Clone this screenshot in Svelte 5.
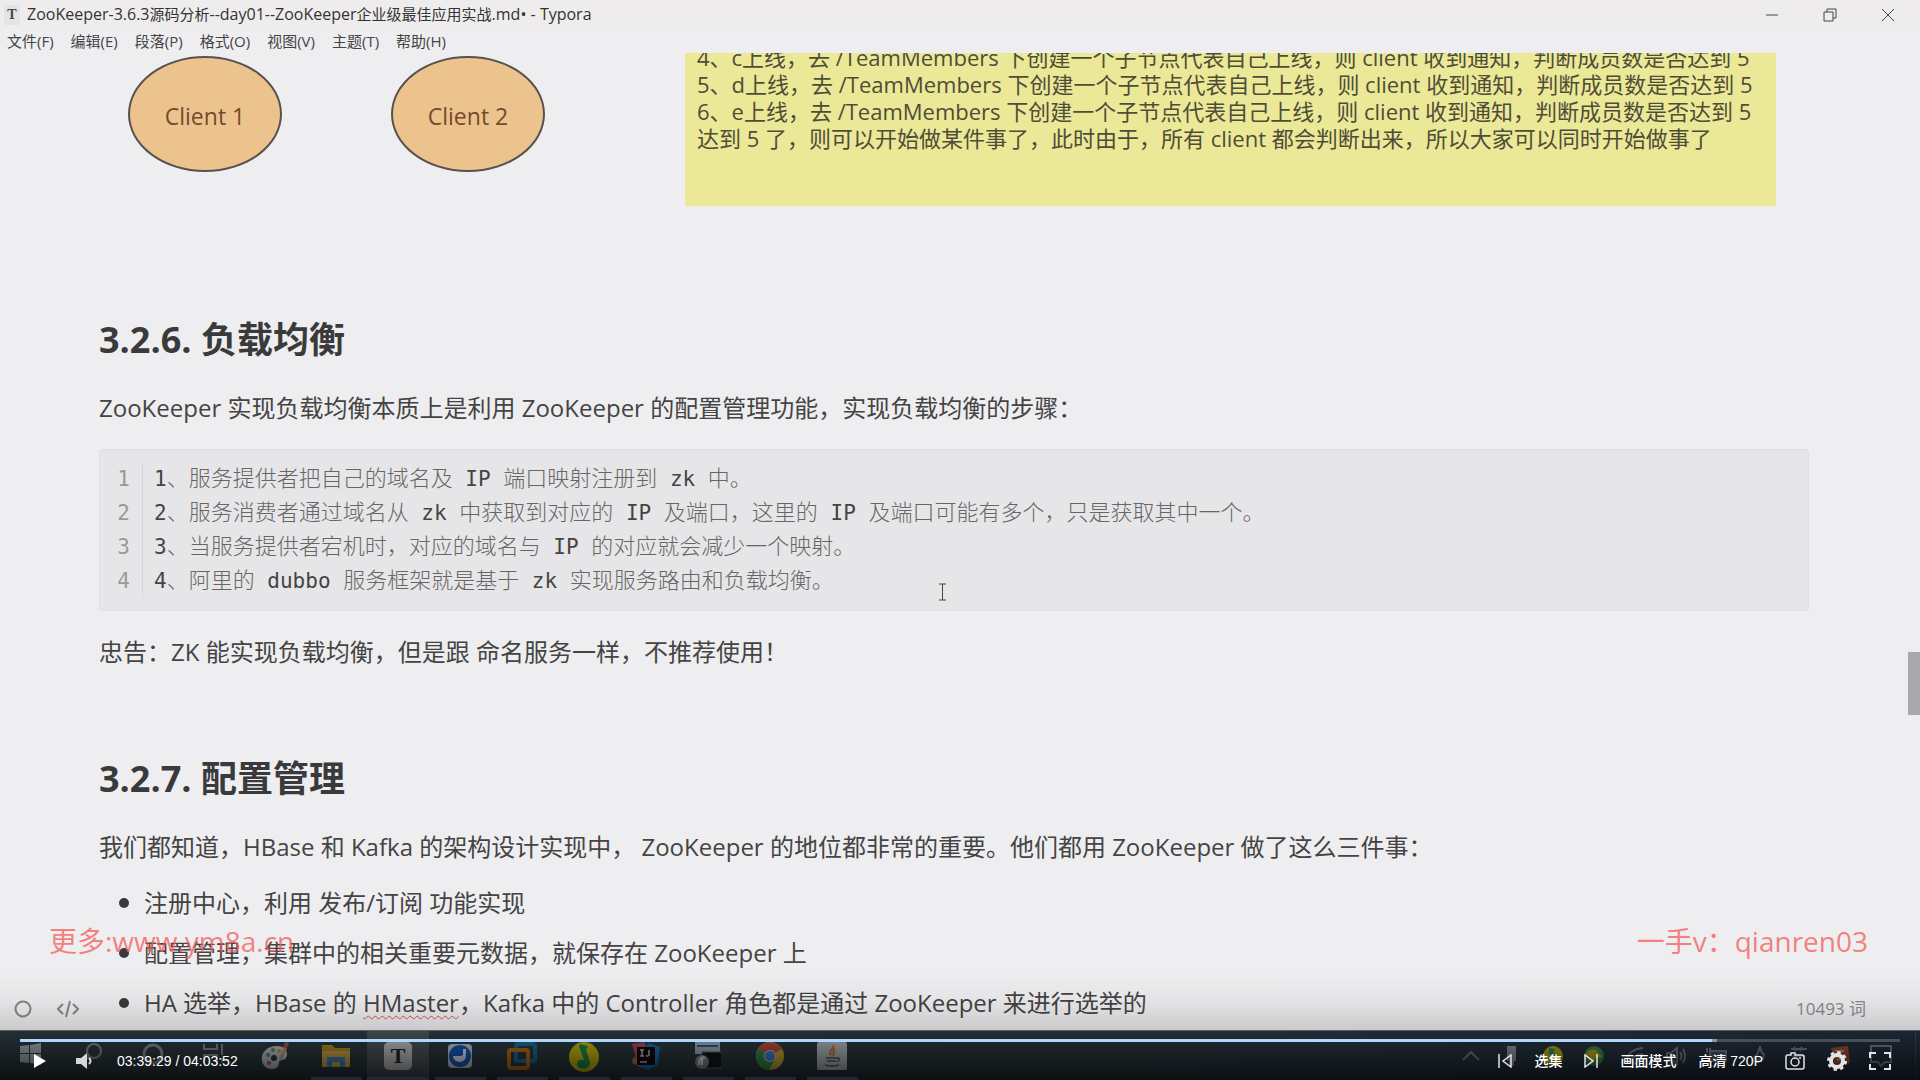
<script lang="ts">
  const menus = ['文件(F)', '编辑(E)', '段落(P)', '格式(O)', '视图(V)', '主题(T)', '帮助(H)']

  const noteLines = [
    '4、c上线，去 /TeamMembers 下创建一个子节点代表自己上线，则 client 收到通知，判断成员数是否达到 5',
    '5、d上线，去 /TeamMembers 下创建一个子节点代表自己上线，则 client 收到通知，判断成员数是否达到 5',
    '6、e上线，去 /TeamMembers 下创建一个子节点代表自己上线，则 client 收到通知，判断成员数是否达到 5',
    '达到 5 了，则可以开始做某件事了，此时由于，所有 client 都会判断出来，所以大家可以同时开始做事了'
  ]

  const codeLines = [
    '1、服务提供者把自己的域名及 IP 端口映射注册到 zk 中。',
    '2、服务消费者通过域名从 zk 中获取到对应的 IP 及端口，这里的 IP 及端口可能有多个，只是获取其中一个。',
    '3、当服务提供者宕机时，对应的域名与 IP 的对应就会减少一个映射。',
    '4、阿里的 dubbo 服务框架就是基于 zk 实现服务路由和负载均衡。'
  ]

  // 把一行代码拆成英文段和中文段
  function split(line: string) {
    return line.match(/[\x20-\x7e]+|[^\x20-\x7e]+/g) ?? []
  }

  function isLatin(part: string) {
    return /^[\x20-\x7e]/.test(part)
  }

  const apps = ['folder', 'typora', 'todo', 'vmware', 'music', 'idea', 'terminal', 'chrome', 'java']

  const duration = 4 * 3600 + 3 * 60 + 52
  let current = 3 * 3600 + 39 * 60 + 29
  let buffered = 13208

  function format(s: number) {
    const pad = (n: number) => String(n).padStart(2, '0')
    return `${pad(Math.floor(s / 3600))}:${pad(Math.floor(s / 60) % 60)}:${pad(s % 60)}`
  }

  $: played = (current / duration) * 100
  $: loaded = (buffered / duration) * 100
</script>

<div class="screen">
  <header class="titlebar">
    <span class="logo">T</span>
    <h1>ZooKeeper-3.6.3<span>源码分析</span>--day01--ZooKeeper<span>企业级最佳应用实战</span>.md• - Typora</h1>
    <div class="window-buttons">
      <button aria-label="最小化">
        <svg width="14" height="14" viewBox="0 0 14 14"><path d="M1 7h12" /></svg>
      </button>
      <button aria-label="还原">
        <svg width="14" height="14" viewBox="0 0 14 14"><path d="M1 4h9v9H1zM4 4V1h9v9h-3" /></svg>
      </button>
      <button aria-label="关闭">
        <svg width="14" height="14" viewBox="0 0 14 14"><path d="M1 1l12 12M13 1L1 13" /></svg>
      </button>
    </div>
  </header>

  <nav class="menubar">
    {#each menus as menu}
      <button>{menu}</button>
    {/each}
  </nav>

  <main class="document">
    <div class="diagram">
      <div class="client">Client 1</div>
      <div class="client">Client 2</div>
      <div class="note">
        <div class="note-text">
          {#each noteLines as line}
            <p>{line}</p>
          {/each}
        </div>
      </div>
    </div>

    <h2>3.2.6. 负载均衡</h2>
    <p>ZooKeeper 实现负载均衡本质上是利用 ZooKeeper 的配置管理功能，实现负载均衡的步骤：</p>

    <div class="code">
      {#each codeLines as line, i}
        <div class="code-line">
          <span class="number">{i + 1}</span>
          <code>{#each split(line) as part}<span class:latin={isLatin(part)}>{part}</span>{/each}</code>
        </div>
      {/each}
    </div>

    <p>忠告：ZK 能实现负载均衡，但是跟 命名服务一样，不推荐使用！</p>

    <h2 class="second">3.2.7. 配置管理</h2>
    <p>我们都知道，HBase 和 Kafka 的架构设计实现中， ZooKeeper 的地位都非常的重要。他们都用 ZooKeeper 做了这么三件事：</p>

    <ul>
      <li>注册中心，利用 发布/订阅 功能实现</li>
      <li>配置管理，集群中的相关重要元数据，就保存在 ZooKeeper 上</li>
      <li>HA 选举，HBase 的 <u>HMaster</u>，Kafka 中的 Controller 角色都是通过 ZooKeeper 来进行选举的</li>
    </ul>

    <div class="scroll-thumb"></div>
    <svg class="caret" width="9" height="18" viewBox="0 0 9 18"><path d="M1 1h7M1 17h7M4.500 1v16" /></svg>
  </main>

  <footer class="statusbar">
    <button aria-label="侧边栏">
      <svg width="18" height="18" viewBox="0 0 18 18"><circle cx="9" cy="9" r="7.500" /></svg>
    </button>
    <button aria-label="源代码模式">
      <svg width="22" height="18" viewBox="0 0 22 18"><path d="M6 4L1 9l5 5M16 4l5 5-5 5M13 1L9 17" /></svg>
    </button>
    <span class="words">10493 词</span>
  </footer>

  <div class="taskbar">
    <div class="system">
      <span>
        <svg width="24" height="24" viewBox="0 0 24 24" fill="#9aa7ae"><path d="M1 4l9-1v8H1zM11 3l11-2v10H11zM1 12h9v9l-9-1zM11 12h11v11l-11-2z" /></svg>
      </span>
      <span>
        <svg width="24" height="24" viewBox="0 0 24 24" fill="none" stroke="#7d878d" stroke-width="2"><circle cx="14" cy="9" r="7" /><path d="M9 14l-7 8" /></svg>
      </span>
      <span>
        <svg width="24" height="24" viewBox="0 0 24 24" fill="none" stroke="#7d878d" stroke-width="3"><circle cx="12" cy="12" r="9" /></svg>
      </span>
      <span>
        <svg width="24" height="24" viewBox="0 0 24 24" fill="none" stroke="#7d878d" stroke-width="2"><path d="M2 2v5h13V2M2 22v-9h13v9M20 2v11M20 16v4" /></svg>
      </span>
      <span>
        <svg width="28" height="28" viewBox="0 0 28 28"><path d="M1 19C-1 10 8 3 17 4c8 0 11 7 8 12-2 3-6 1-7 4 0 4-2 7-7 7-5 0-9-3-10-8z" fill="#b4bcc2" /><circle cx="7" cy="13" r="2" fill="#4d7b9c" /><circle cx="12" cy="8" r="2" fill="#648b51" /><circle cx="13" cy="16" r="3" fill="#26353c" /><circle cx="18" cy="9" r="2" fill="#bf9345" /><circle cx="8" cy="21" r="2" fill="#9c5148" /><path d="M18 17l5-12 3 1-5 12z" fill="#c09070" /><path d="M22 5l2-5 4 1-2 5z" fill="#a4543c" /></svg>
      </span>
    </div>

    <div class="apps">
      {#each apps as app}
        <span class:active={app === 'typora'}>
          {#if app === 'folder'}
            <svg width="28" height="28" viewBox="0 0 28 28"><path d="M0 3h10l3 3h15v19H0z" fill="#b38624" /><path d="M0 9h28v16H0z" fill="#c8a142" /><path d="M5 15h18v10h-5v-5h-8v5H5z" fill="#3f7fb0" /></svg>
          {:else if app === 'typora'}
            <b>T</b>
          {:else if app === 'todo'}
            <svg width="28" height="28" viewBox="0 0 28 28"><rect x="2" y="2" width="24" height="24" rx="4" fill="#b4c3cf" /><circle cx="14" cy="14" r="11" fill="#1657b4" /><path d="M7 14h8q2 0 2-2V7h3v7a6 6 0 0 1-6 6c-4 0-7-3-7-6z" fill="#d4e0ea" /></svg>
          {:else if app === 'vmware'}
            <svg width="30" height="28" viewBox="0 0 30 28" fill="none" stroke-width="4"><rect x="9" y="2" width="19" height="17" rx="2" stroke="#146c91" /><rect x="2" y="8" width="19" height="18" rx="2" stroke="#b56b18" /><path d="M9 15v4h8" stroke="#146c91" /></svg>
          {:else if app === 'music'}
            <svg width="30" height="30" viewBox="0 0 30 30"><circle cx="15" cy="15" r="15" fill="#c2b40e" /><path d="M11 2l8 2-2 4 4 12c1 8-13 9-13 2 0-3 3-5 7-4L10 4z" fill="#178747" /></svg>
          {:else if app === 'idea'}
            <svg width="30" height="28" viewBox="0 0 30 28"><path d="M1 2l12-2 6 10-8 16-10-5 3-8z" fill="#a6475a" /><path d="M17 1l12 4-2 18-11 5-9-5z" fill="#176ea6" /><path d="M1 17l8-1v8l-7-3z" fill="#b46d38" /><rect x="6" y="5" width="18" height="18" fill="#12090e" /><path d="M9 8h4M11 8v6M9 14h4M18 8v5q0 1-3 1M9 20h7" fill="none" stroke="#b9b9b9" stroke-width="1.500" /></svg>
          {:else if app === 'terminal'}
            <svg width="28" height="28" viewBox="0 0 28 28"><path d="M1 0h25v12H1z" fill="#9aa9b6" /><path d="M3 3h21v2H3z" fill="#315880" /><path d="M8 10h20v16H8z" fill="#11161a" stroke="#59666e" /><circle cx="8" cy="20" r="7" fill="#7e858a" /><path d="M5 23c0-6 2-9 6-7M8 16v7" fill="none" stroke="#d4d9dc" stroke-width="2" /></svg>
          {:else if app === 'chrome'}
            <svg width="28" height="28" viewBox="0 0 28 28"><circle cx="14" cy="14" r="14" fill="#c4a234" /><path d="M14 14L2 7a14 14 0 0 1 24 0z" fill="#b34a3e" /><path d="M14 14L2 7a14 14 0 0 0 11 21l6-11z" fill="#2a8a46" /><circle cx="14" cy="14" r="6" fill="#b9bdc4" /><circle cx="14" cy="14" r="5" fill="#3f78c2" /></svg>
          {:else}
            <svg width="30" height="28" viewBox="0 0 30 28"><rect width="30" height="28" rx="2" fill="#acb2b6" /><path d="M16 3c3 4-6 5-2 10M18 7c-4 3 1 3-2 7" fill="none" stroke="#c06a38" stroke-width="2" /><path d="M9 16h11M10 19h9M8 23q7 2 14 0M20 16q5 0 0 4" fill="none" stroke="#465662" stroke-width="1.500" /></svg>
          {/if}
        </span>
      {/each}
    </div>

    <div class="tray">
      <span><svg width="18" height="10" viewBox="0 0 18 10"><path d="M1 9l8-8 8 8" /></svg></span>
      <span><svg width="16" height="22" viewBox="0 0 16 22"><path d="M3 1h9v15H3zM5 16v5h5v-5" fill="#8b949a" stroke="none" /></svg></span>
      <span><svg width="20" height="20" viewBox="0 0 20 20"><circle cx="10" cy="10" r="10" fill="#b0a918" stroke="none" /><path d="M6 2l6 1-2 4 5 2-3 3-6-4z" fill="#2c8a60" stroke="none" /></svg></span>
      <span><svg width="20" height="20" viewBox="0 0 20 20"><circle cx="10" cy="10" r="10" fill="#38844a" stroke="none" /><path d="M1 9Q5 2 12 4l6 7-6 1-4 5z" fill="#b3a824" stroke="none" /></svg></span>
      <span><svg width="20" height="20" viewBox="0 0 20 20"><path d="M1 15Q4 3 18 2M5 17q2-8 13-9M10 18q1-4 8-4" /></svg></span>
      <span><svg width="20" height="20" viewBox="0 0 20 20"><path d="M1 7h4l6-5v16l-6-5H1zM14 6q3 4 0 8M17 3q4 7 0 14" /></svg></span>
      <span><svg width="22" height="18" viewBox="0 0 22 18"><path d="M4 4h16v10H4z" fill="#4a5260" /><path d="M1 1v5M4 1v5" /></svg></span>
      <span><svg width="16" height="20" viewBox="0 0 16 20"><path d="M5 14L10 1l2 6 2 1-1 5-9 2 1-6M5 14l-4 5" /></svg></span>
      <span><svg width="18" height="20" viewBox="0 0 18 20"><path d="M1 3h16M4 1l2 4M12 1l-2 4M3 10h12" /></svg></span>
      <span><svg width="20" height="22" viewBox="0 0 20 22"><path d="M1 3l17-2 2 17-15 3z" fill="#9c4f34" stroke="none" /><path d="M14 6H7l6 6-6 3" stroke="#c49b8c" /></svg></span>
      <span><svg width="22" height="22" viewBox="0 0 22 22"><path d="M1 1h20v16h-6l-4 4-3-4H1z" /></svg></span>
    </div>
  </div>

  <span class="watermark left">更多:www.ym8a.cn</span>
  <span class="watermark right">一手v：qianren03</span>

  <div class="player">
    <input
      type="range"
      aria-label="播放进度"
      min="0"
      max={duration}
      bind:value={current}
      style="--played: {played}%; --loaded: {loaded}%"
    />
    <div class="controls">
      <button aria-label="播放">
        <svg width="14" height="14" viewBox="0 0 14 14"><path d="M1 0l12 7-12 7z" fill="#fff" /></svg>
      </button>
      <button class="volume" aria-label="音量">
        <svg width="18" height="16" viewBox="0 0 18 16"><path d="M0 5h5l6-5v16l-6-5H0z" fill="#d5d7d8" /><path d="M13 5q3 3 0 6" fill="none" stroke="#d5d7d8" stroke-width="2" /></svg>
      </button>
      <span>{format(current)} / {format(duration)}</span>

      <div class="right-controls">
        <button aria-label="上一集">
          <svg width="14" height="14" viewBox="0 0 14 14"><path d="M1 0v14M13 1v12L5 7z" /></svg>
        </button>
        <button>选集</button>
        <button aria-label="下一集">
          <svg width="14" height="14" viewBox="0 0 14 14"><path d="M13 0v14M1 1v12l8-6z" /></svg>
        </button>
        <button>画面模式</button>
        <button>高清 720P</button>
        <button aria-label="截图">
          <svg width="20" height="18" viewBox="0 0 20 18"><path d="M3 3h3V1h4v2h7q2 0 2 2v10q0 2-2 2H3q-2 0-2-2V5q0-2 2-2z" /><circle cx="10" cy="10" r="4" /><path d="M14 6h2" /></svg>
        </button>
        <button aria-label="设置">
          <svg width="20" height="20" viewBox="0 0 20 20"><circle cx="10" cy="10" r="6" stroke-width="4" /><circle cx="10" cy="10" r="8.500" stroke-width="3" stroke-dasharray="3.340 3.340" /></svg>
        </button>
        <button aria-label="全屏">
          <svg width="22" height="18" viewBox="0 0 22 18"><path d="M1 6V1h6M15 1h6v5M21 12v5h-6M7 17H1v-5" stroke-width="2" /></svg>
        </button>
      </div>
    </div>
  </div>
</div>

<style>
  :global(body) {
    margin: 0;
    background: #eeeef0;
  }

  .screen {
    position: relative;
    display: flex;
    flex-direction: column;
    height: 100vh;
    overflow: hidden;
    background: #eeeef0;
    color: #444;
    font-family: 'Open Sans', 'Noto Sans CJK SC', sans-serif;
  }

  button {
    display: flex;
    align-items: center;
    padding: 0;
    border: none;
    background: none;
    color: inherit;
    font: inherit;
  }

  svg {
    display: block;
    flex: none;
  }

  p,
  h1,
  h2,
  ul {
    margin: 0;
    padding: 0;
  }

  .titlebar {
    flex: none;
    display: flex;
    align-items: center;
    height: 29px;
    padding-left: 4px;
    background: #efecee;
  }

  .logo {
    width: 16px;
    margin-right: 7px;
    background: #e4e4e5;
    text-align: center;
    font: bold 14px/20px 'Liberation Serif', serif;
  }

  h1 {
    color: #333;
    font-size: 16px;
    font-weight: 400;
    line-height: 29px;
    white-space: nowrap;
  }

  h1 span {
    font-size: 15px;
  }

  .window-buttons {
    display: flex;
    gap: 44px;
    margin-left: auto;
    padding-right: 25px;
  }

  .window-buttons svg {
    fill: none;
    stroke: #444;
  }

  .menubar {
    flex: none;
    display: flex;
    gap: 17px;
    height: 24px;
    padding-left: 7px;
    font-size: 15px;
    line-height: 24px;
  }

  .document {
    position: relative;
    flex: 1;
    min-height: 0;
    overflow: hidden;
    padding: 0 111px 0 99px;
    font-size: 24px;
    line-height: 38px;
  }

  .diagram {
    display: flex;
    height: 153px;
    margin-bottom: 109px;
    padding: 0 33px 0 29px;
  }

  .client {
    box-sizing: border-box;
    width: 154px;
    height: 116px;
    margin: 3px 109px 0 0;
    border: 2px solid #57514f;
    border-radius: 50%;
    background: #ecc38d;
    color: #74492f;
    font-size: 23px;
    line-height: 116px;
    text-align: center;
  }

  .note {
    flex: 1;
    margin-left: 31px;
    overflow: hidden;
    background: #ebe897;
    color: #4f4d38;
    font-size: 22px;
    line-height: 27px;
    white-space: nowrap;
  }

  .note-text {
    margin: -9px 0 0 12px;
  }

  h2 {
    margin-bottom: 24px;
    color: #3a3a3c;
    font-size: 36px;
    font-weight: 700;
    line-height: 50px;
  }

  .code {
    margin: 22px 0 22px;
    padding: 12px 0 12px;
    border: 1px solid #dfdfe2;
    border-radius: 3px;
    background: #e6e6e8;
    font-family: 'DejaVu Sans Mono', 'Noto Sans CJK SC', monospace;
    font-size: 21px;
    line-height: 34px;
  }

  .code-line {
    display: flex;
    height: 34px;
    white-space: pre;
  }

  .number {
    box-sizing: border-box;
    width: 43px;
    padding-right: 12px;
    border-right: 1px solid #d8d8da;
    color: #999;
    text-align: right;
  }

  code {
    margin-left: 11px;
    color: #666;
    font-family: inherit;
    font-size: 22px;
    font-weight: 300;
  }

  .latin {
    color: #444;
    font-size: 21px;
    font-weight: 400;
  }

  .second {
    margin-top: 83px;
  }

  ul {
    margin-top: 12px;
    list-style: none;
    line-height: 50px;
  }

  li {
    display: flex;
    align-items: center;
    height: 50px;
    white-space: pre;
  }

  li::before {
    content: '';
    width: 10px;
    height: 10px;
    margin: 0 15px 0 20px;
    border-radius: 50%;
    background: #3a3a3c;
  }

  u {
    text-decoration: underline wavy #d9534f 1px;
    text-underline-offset: 3px;
  }

  .scroll-thumb {
    position: absolute;
    top: 599px;
    right: 0;
    width: 12px;
    height: 63px;
    background: #a9a9ab;
  }

  .caret {
    position: absolute;
    top: 530px;
    left: 938px;
    fill: none;
    stroke: #444;
  }

  .statusbar {
    position: absolute;
    right: 0;
    bottom: 60px;
    left: 0;
    display: flex;
    align-items: center;
    gap: 25px;
    height: 22px;
    padding: 0 54px 0 14px;
    color: #8a8a8c;
    font-size: 17px;
    line-height: 22px;
  }

  .statusbar svg {
    fill: none;
    stroke: #868688;
    stroke-width: 2;
  }

  .words {
    margin-left: auto;
  }

  .taskbar {
    flex: none;
    display: flex;
    box-sizing: border-box;
    height: 50px;
    border-top: 1px solid #6a7072;
    background: linear-gradient(90deg, #2a383e, #29363e 60%, #212d3e);
  }

  .system,
  .apps {
    display: flex;
  }

  .system span,
  .apps span {
    display: flex;
    justify-content: center;
    box-sizing: border-box;
    width: 61px;
    padding-top: 11px;
  }

  .apps span {
    width: 62px;
    height: 49px;
    background: linear-gradient(#5f7f9f, #5f7f9f) center bottom / 51px 3px no-repeat;
  }

  .apps .active {
    border-bottom: 3px solid #5f7f9f;
    background: #495256;
  }

  .apps b {
    width: 28px;
    height: 28px;
    border-radius: 5px;
    background: #b9bbbc;
    color: #222;
    font: bold 22px/28px 'Liberation Serif', serif;
    text-align: center;
  }

  .tray {
    display: flex;
    align-items: center;
    margin-left: auto;
    padding-right: 14px;
    border-right: 1px solid #39434e;
    margin-right: 4px;
  }

  .tray span {
    display: flex;
    justify-content: center;
    width: 41px;
  }

  .tray svg {
    fill: none;
    stroke: #707a85;
    stroke-width: 2;
  }

  .watermark {
    position: absolute;
    bottom: 119px;
    color: rgba(242, 92, 88, 0.75);
    font-size: 28px;
    line-height: 40px;
  }

  .left {
    left: 49px;
  }

  .right {
    right: 52px;
  }

  .player {
    position: absolute;
    right: 0;
    bottom: 0;
    left: 0;
    box-sizing: border-box;
    height: 110px;
    padding: 69px 20px 0;
    background: linear-gradient(transparent, rgba(0, 0, 0, 0.04) 27%, rgba(0, 0, 0, 0.15) 54%, rgba(0, 0, 0, 0.7));
  }

  input {
    display: block;
    width: 100%;
    height: 3px;
    margin: 0;
    appearance: none;
    background: linear-gradient(90deg, #b0d6fd var(--played), #8b969e var(--played), #8b969e var(--loaded), #474f57 var(--loaded));
  }

  input::-webkit-slider-thumb {
    width: 0;
    height: 0;
    appearance: none;
  }

  .controls {
    display: flex;
    align-items: center;
    height: 38px;
    padding: 0 9px 0 13px;
    color: #fff;
    font: 14px/20px 'Liberation Sans', 'Noto Sans CJK SC', sans-serif;
  }

  .volume {
    margin: 0 23px 0 29px;
  }

  .right-controls {
    display: flex;
    align-items: center;
    gap: 22px;
    margin-left: auto;
    font-weight: 500;
  }

  .right-controls svg {
    fill: none;
    stroke: #e2e4e6;
    stroke-width: 1.500;
  }
</style>
